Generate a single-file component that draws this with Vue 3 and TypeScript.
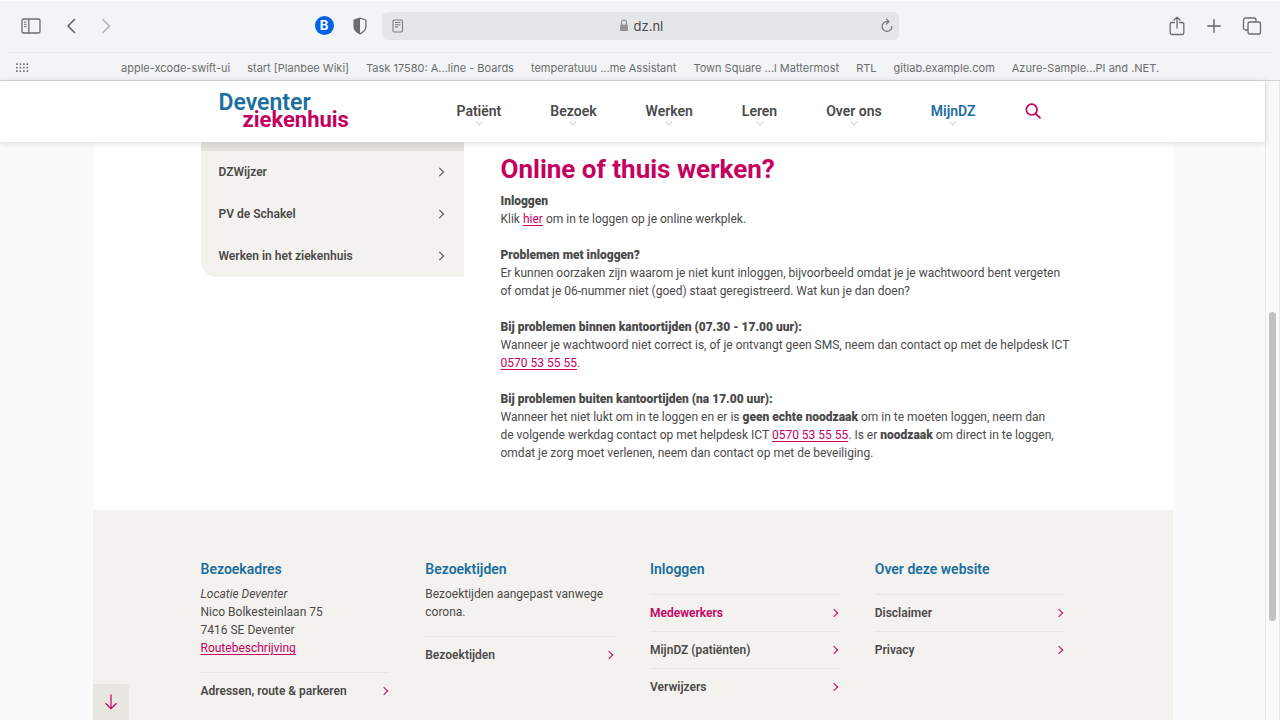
<script setup lang="ts">
import { ref } from 'vue'

interface NavItem { label: string; accent?: boolean }
interface FooterLink { label: string; active?: boolean }

const address = ref<string>('dz.nl')

const bookmarks: string[] = [
  'apple-xcode-swift-ui',
  'start [Planbee Wiki]',
  'Task 17580: A...line - Boards',
  'temperatuuu ...me Assistant',
  'Town Square ...l Mattermost',
  'RTL',
  'gitlab.example.com',
  'Azure-Sample...PI and .NET.',
]

const navItems: NavItem[] = [
  { label: 'Patiënt' },
  { label: 'Bezoek' },
  { label: 'Werken' },
  { label: 'Leren' },
  { label: 'Over ons' },
  { label: 'MijnDZ', accent: true },
]

const sideLinks: string[] = ['DZWijzer', 'PV de Schakel', 'Werken in het ziekenhuis']

const addressLinks: FooterLink[] = [{ label: 'Adressen, route & parkeren' }]
const visitLinks: FooterLink[] = [{ label: 'Bezoektijden' }]
const loginLinks: FooterLink[] = [
  { label: 'Medewerkers', active: true },
  { label: 'MijnDZ (patiënten)' },
  { label: 'Verwijzers' },
]
const siteLinks: FooterLink[] = [{ label: 'Disclaimer' }, { label: 'Privacy' }]
</script>

<template>
  <div class="browser">
    <header class="chrome">
      <div class="toolbar">
        <div class="tools tools-left">
          <button type="button" class="tool" aria-label="Sidebar">
            <svg width="20" height="16" viewBox="0 0 20 16" fill="none" stroke="#6b6c6d" stroke-width="1.3">
              <rect x="1" y="1" width="18" height="14" rx="1.5" />
              <path d="M7.8 1v14" />
              <path d="M3 4h2.6M3 6.3h2.6M3 8.6h2.6" stroke-width="1" />
            </svg>
          </button>
          <button type="button" class="tool" aria-label="Back">
            <svg width="12" height="16" viewBox="0 0 12 16" fill="none" stroke="#606162" stroke-width="1.6" stroke-linecap="round" stroke-linejoin="round">
              <path d="M9.5 1.5 3 8l6.5 6.5" />
            </svg>
          </button>
          <button type="button" class="tool" aria-label="Forward">
            <svg width="12" height="16" viewBox="0 0 12 16" fill="none" stroke="#b4b5b5" stroke-width="1.6" stroke-linecap="round" stroke-linejoin="round">
              <path d="M2 1.5 8.5 8 2 14.5" />
            </svg>
          </button>
          <span class="spacer"></span>
          <button type="button" class="tool badge">B</button>
          <button type="button" class="tool" aria-label="Privacy report">
            <svg width="14" height="18" viewBox="0 0 14 18">
              <path d="M7 1.2 12.9 3V9.5C12.9 13 10 15.300 7 16.800 4 15.300 1.100 13 1.100 9.500V3Z" fill="none" stroke="#6b6c6d" stroke-width="1.3" stroke-linejoin="round" />
              <path d="M7 1.200V16.800C4 15.300 1.100 13 1.100 9.500V3Z" fill="#6b6c6d" />
            </svg>
          </button>
        </div>
        <div class="address">
          <svg width="12" height="14" viewBox="0 0 12 14" fill="none" stroke="#7b7c7d" stroke-width="1.1">
            <rect x="1" y="1" width="9.5" height="12" rx="1.5" />
            <path d="M3 3.500h5.500M3 5.700h5.500M3 7.900h3" />
          </svg>
          <div class="site">
            <svg width="10" height="13" viewBox="0 0 10 13">
              <rect x="1" y="5.5" width="8" height="6.5" rx="1" fill="#949596" />
              <path d="M2.600 6V3.600a2.400 2.400 0 0 1 4.800 0V6" fill="none" stroke="#949596" stroke-width="1.2" />
            </svg>
            <input v-model="address" type="text" aria-label="Address" />
          </div>
          <button type="button" class="tool" aria-label="Reload">
            <svg width="12" height="15" viewBox="0 0 12 15" fill="none" stroke="#747576" stroke-width="1.2" stroke-linecap="round" stroke-linejoin="round">
              <path d="M7.500 3.600H6.200A4.900 4.900 0 1 0 10.900 8.400" />
              <path d="M5.500 1.200 7.900 3.600 5.500 6" />
            </svg>
          </button>
        </div>
        <div class="tools tools-right">
          <button type="button" class="tool" aria-label="Share">
            <svg width="18" height="20" viewBox="0 0 18 20" fill="none" stroke="#6b6c6d" stroke-width="1.3" stroke-linecap="round" stroke-linejoin="round">
              <path d="M6.500 6.500H4A1.800 1.800 0 0 0 2.200 8.300v8.400A1.800 1.800 0 0 0 4 18.500h10a1.800 1.800 0 0 0 1.800-1.800V8.300A1.800 1.800 0 0 0 14 6.500h-2.500" />
              <path d="M9 12V1.200M6 4l3-2.900L12 4" />
            </svg>
          </button>
          <button type="button" class="tool" aria-label="New tab">
            <svg width="14" height="14" viewBox="0 0 14 14" fill="none" stroke="#606162" stroke-width="1.4" stroke-linecap="round">
              <path d="M7 .8v12.400M.8 7h12.400" />
            </svg>
          </button>
          <button type="button" class="tool" aria-label="Tab overview">
            <svg width="20" height="18" viewBox="0 0 20 18" fill="none" stroke="#6b6c6d" stroke-width="1.3">
              <rect x="6" y="5" width="12.5" height="12" rx="2" />
              <path d="M6 13H3.500a2 2 0 0 1-2-2V3a2 2 0 0 1 2-2H12a2 2 0 0 1 2 2v2" />
            </svg>
          </button>
        </div>
      </div>
      <nav class="bookmarks" aria-label="Bookmarks">
        <button type="button" class="tool" aria-label="Show bookmarks">
          <svg width="14" height="10" viewBox="0 0 14 10" fill="#77787a">
            <template v-for="r in 3" :key="r">
              <rect v-for="c in 4" :key="c" :x="c * 3.5 - 2.500" :y="r * 3.5 - 3.200" width="1.7" height="1.7" />
            </template>
          </svg>
        </button>
        <ul>
          <li v-for="b in bookmarks" :key="b"><a href="#">{{ b }}</a></li>
        </ul>
      </nav>
    </header>

    <div class="viewport">
      <div class="page">
        <header class="masthead">
          <div class="masthead-inner">
            <a href="#" class="logo"><span>Deventer</span><span class="second">ziekenhuis</span></a>
            <nav class="main-nav" aria-label="Hoofdmenu">
              <a v-for="n in navItems" :key="n.label" href="#" :class="{ accent: n.accent }">
                {{ n.label }}
                <svg width="8" height="5" viewBox="0 0 8 5" fill="none" stroke="#dcdcdc" stroke-width="1.3">
                  <path d="M.7.6 4 4 7.300.6" />
                </svg>
              </a>
              <button type="button" class="tool search" aria-label="Zoeken">
                <svg width="16" height="16" viewBox="0 0 16 16" fill="none" stroke="#c6005f" stroke-width="1.7" stroke-linecap="round">
                  <circle cx="6.7" cy="6.6" r="5.4" />
                  <path d="M10.700 10.600 15 14.800" />
                </svg>
              </button>
            </nav>
          </div>
        </header>

        <div class="sheet">
          <div class="content">
            <aside>
              <ul>
                <li v-for="s in sideLinks" :key="s">
                  <a href="#">{{ s }}
                    <svg width="7" height="10" viewBox="0 0 7 10" fill="none" stroke="#5a5a5a" stroke-width="1.2">
                      <path d="M1.300.8 5.500 5 1.300 9.200" />
                    </svg>
                  </a>
                </li>
              </ul>
            </aside>
            <main>
              <h1>Online of thuis werken?</h1>
              <p>
                <strong>Inloggen</strong><br />
                Klik <a href="#">hier</a> om in te loggen op je online werkplek.
              </p>
              <p>
                <strong>Problemen met inloggen?</strong><br />
                Er kunnen oorzaken zijn waarom je niet kunt inloggen, bijvoorbeeld omdat je je wachtwoord bent vergeten<br />
                of omdat je 06-nummer niet (goed) staat geregistreerd. Wat kun je dan doen?
              </p>
              <p>
                <strong>Bij problemen binnen kantoortijden (07.30 - 17.00 uur):</strong><br />
                Wanneer je wachtwoord niet correct is, of je ontvangt geen SMS, neem dan contact op met de helpdesk ICT<br />
                <a href="#">0570 53 55 55</a>.
              </p>
              <p>
                <strong>Bij problemen buiten kantoortijden (na 17.00 uur):</strong><br />
                Wanneer het niet lukt om in te loggen en er is <strong>geen echte noodzaak</strong> om in te moeten loggen, neem dan<br />
                de volgende werkdag contact op met helpdesk ICT <a href="#">0570 53 55 55</a>. Is er <strong>noodzaak</strong> om direct in te loggen,<br />
                omdat je zorg moet verlenen, neem dan contact op met de beveiliging.
              </p>
            </main>
          </div>

          <footer>
            <section>
              <h2>Bezoekadres</h2>
              <p><em>Locatie Deventer</em><br />Nico Bolkesteinlaan 75<br />7416 SE Deventer<br /><a href="#">Routebeschrijving</a></p>
              <ul>
                <li v-for="l in addressLinks" :key="l.label"><a href="#">{{ l.label }}<i class="arrow"></i></a></li>
              </ul>
            </section>
            <section>
              <h2>Bezoektijden</h2>
              <p>Bezoektijden aangepast vanwege corona.</p>
              <ul>
                <li v-for="l in visitLinks" :key="l.label"><a href="#">{{ l.label }}<i class="arrow"></i></a></li>
              </ul>
            </section>
            <section>
              <h2>Inloggen</h2>
              <ul>
                <li v-for="l in loginLinks" :key="l.label"><a href="#" :class="{ active: l.active }">{{ l.label }}<i class="arrow"></i></a></li>
              </ul>
            </section>
            <section>
              <h2>Over deze website</h2>
              <ul>
                <li v-for="l in siteLinks" :key="l.label"><a href="#">{{ l.label }}<i class="arrow"></i></a></li>
              </ul>
            </section>
          </footer>

          <button type="button" class="to-bottom" aria-label="Naar beneden">
            <svg width="14" height="16" viewBox="0 0 14 16" fill="none" stroke="#c6005f" stroke-width="1.2">
              <path d="M7 .5v14M1.500 9.300 7 14.700l5.500-5.400" />
            </svg>
          </button>
        </div>
      </div>
      <div class="scrollbar"><div class="thumb"></div></div>
    </div>
  </div>
</template>

<style>
body {
  margin: 0;
}
</style>

<style scoped>
* {
  box-sizing: border-box;
}
ul {
  list-style: none;
  margin: 0;
  padding: 0;
}
h1, h2, p {
  margin: 0;
}
svg {
  display: block;
  flex: none;
}
.browser {
  display: flex;
  flex-direction: column;
  height: 100vh;
  overflow: hidden;
  font-family: Roboto, "Noto Sans", sans-serif;
  font-size: 12px;
  line-height: 18px;
  color: #4a4a4a;
}
.tool {
  border: 0;
  padding: 0;
  background: none;
  flex: none;
}

/* browser chrome */
.chrome {
  background: #f3f4f5;
  border-top: 1px solid #fafafa;
  border-bottom: 1px solid #d6d6d7;
  font-family: Inter, "Liberation Sans", sans-serif;
}
.toolbar {
  display: grid;
  grid-template-columns: 1fr 517px 1fr;
  align-items: center;
  height: 51px;
  padding-bottom: 2px;
}
.tools {
  display: flex;
  align-items: center;
}
.tools-left {
  gap: 24px;
  padding: 0 15px 0 21px;
}
.tools-right {
  justify-content: flex-end;
  gap: 21px;
  padding-right: 18px;
}
.spacer {
  flex: 1;
}
.badge {
  width: 19px;
  height: 19px;
  margin-right: -5px;
  border-radius: 50%;
  background: #0061ea;
  color: #fff;
  font: 700 13px/19px Inter, sans-serif;
}
.address {
  display: flex;
  align-items: center;
  justify-content: space-between;
  height: 28px;
  padding: 0 6px 0 10px;
  border-radius: 6px;
  background: #e5e6e7;
}
.site {
  display: flex;
  align-items: center;
  gap: 5px;
}
.site input {
  width: 32px;
  padding: 0;
  border: 0;
  background: none;
  font: 400 13px/18px Inter, sans-serif;
  color: #48494a;
}
.bookmarks {
  display: flex;
  align-items: center;
  gap: 92px;
  height: 28px;
  margin: 0 8px;
  padding: 3px 0 0 7px;
  border-top: 1px solid #e6e7e7;
}
.bookmarks ul {
  display: flex;
  gap: 17px;
}
.bookmarks a {
  font-size: 11px;
  color: #6c6d6e;
  text-decoration: none;
  white-space: nowrap;
}

/* viewport */
.viewport {
  flex: 1;
  display: flex;
  min-height: 0;
}
.page {
  flex: 1;
  display: flex;
  flex-direction: column;
  min-width: 0;
  background: #fafafa;
}
.scrollbar {
  width: 15px;
  padding: 231px 3px 0;
  border: solid #e8e8e8;
  border-width: 0 1px;
  background: #fafafa;
}
.thumb {
  height: 309px;
  border-radius: 4px;
  background: #c1c1c1;
}

/* masthead */
.masthead {
  position: relative;
  z-index: 1;
  background: #fff;
  box-shadow: 0 1px 7px rgba(0, 0, 0, 0.14);
}
.masthead-inner {
  display: flex;
  justify-content: space-between;
  max-width: 1080px;
  height: 61px;
  margin: 0 auto;
  padding: 0 132px 0 126px;
}
.logo {
  display: flex;
  flex-direction: column;
  padding-top: 13px;
  font-weight: 600;
  font-size: 23px;
  line-height: 17px;
  color: #1a6f9e;
  text-decoration: none;
}
.logo .second {
  padding-left: 24px;
  font-weight: 700;
  font-size: 22px;
  color: #c6005f;
}
.main-nav {
  display: flex;
  gap: 49px;
}
.main-nav a {
  display: flex;
  flex-direction: column;
  align-items: center;
  padding-top: 21px;
  font-weight: 600;
  font-size: 14px;
  line-height: 19px;
  color: #4a4a4a;
  text-decoration: none;
  white-space: nowrap;
}
.main-nav a.accent {
  color: #1a6f9e;
}
.search {
  padding-bottom: 2px;
}

/* sheet */
.sheet {
  position: relative;
  flex: 1;
  display: flex;
  flex-direction: column;
  width: 100%;
  max-width: 1080px;
  min-height: 0;
  margin: 0 auto;
  background: #fff;
}
.content {
  display: flex;
  gap: 37px;
  height: 368px;
  padding: 0 90px 0 108px;
  flex: none;
}
aside {
  flex: none;
  width: 263px;
}
aside ul {
  border-top: 9px solid #e4e3de;
  border-bottom-left-radius: 15px;
  background: #f4f2ee;
}
aside a {
  display: flex;
  align-items: center;
  justify-content: space-between;
  height: 42px;
  padding: 0 19px 0 18px;
  font-weight: 600;
  color: #4a4a4a;
  text-decoration: none;
}
main {
  flex: 1;
  min-width: 0;
  padding-top: 12px;
}
h1 {
  margin-bottom: 8px;
  font-weight: 700;
  font-size: 26px;
  line-height: 30px;
  color: #c6005f;
}
strong {
  font-weight: 900;
}
main p + p {
  margin-top: 18px;
}
p a {
  color: #c6005f;
  text-underline-offset: 2px;
}

/* footer */
footer {
  flex: 1;
  display: grid;
  grid-template-columns: repeat(4, 1fr);
  gap: 35px;
  min-height: 0;
  padding: 49px 108px 0;
  background: #f4f2ee;
}
h2 {
  font-weight: 600;
  font-size: 14px;
  line-height: 20px;
  color: #1a6f9e;
}
footer p {
  margin-top: 6px;
}
footer ul {
  margin-top: 15px;
}
footer li {
  border-top: 1px solid #e7e6e2;
}
footer li a {
  display: flex;
  align-items: center;
  justify-content: space-between;
  height: 36px;
  padding-right: 3px;
  font-weight: 600;
  color: #4a4a4a;
  text-decoration: none;
}
footer li a.active {
  color: #c6005f;
}
.arrow {
  width: 6px;
  height: 6px;
  border: solid #c6005f;
  border-width: 1px 1px 0 0;
  transform: rotate(45deg);
}
.to-bottom {
  position: absolute;
  left: 0;
  bottom: 0;
  display: grid;
  place-items: center;
  width: 36px;
  height: 36px;
  padding: 0;
  border: 0;
  border-top-right-radius: 3px;
  background: #e7e6e1;
}
</style>
